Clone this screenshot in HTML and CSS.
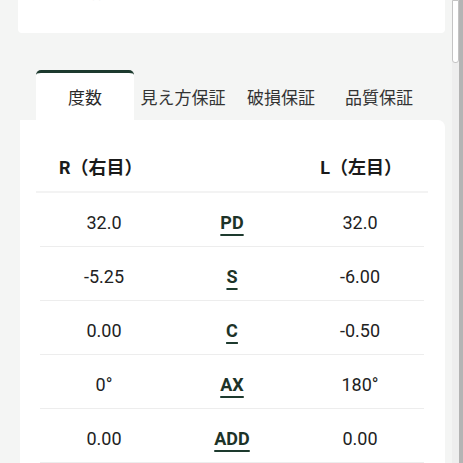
FILE: index.html
```html
<!DOCTYPE html>
<html lang="ja">
<head>
<meta charset="UTF-8" />
<meta name="viewport" content="width=device-width, initial-scale=1" />
<title>度数</title>
<link rel="stylesheet" href="styles.css">
</head>
<body>
  <div class="top-card">
    <p class="top-note">ご注文内容の確認</p>
  </div>

  <div class="section">
    <div class="tabs">
      <div class="tab active">度数</div>
      <div class="tab">見え方保証</div>
      <div class="tab">破損保証</div>
      <div class="tab">品質保証</div>
    </div>

    <div class="card">
      <div class="row head">
        <span class="eye">R（右目）</span>
        <span></span>
        <span class="eye">L（左目）</span>
      </div>
      <div class="row">
        <span class="val">32.0</span>
        <span class="label"><u>PD</u></span>
        <span class="val">32.0</span>
      </div>
      <div class="row">
        <span class="val">-5.25</span>
        <span class="label"><u>S</u></span>
        <span class="val">-6.00</span>
      </div>
      <div class="row">
        <span class="val">0.00</span>
        <span class="label"><u>C</u></span>
        <span class="val">-0.50</span>
      </div>
      <div class="row">
        <span class="val">0°</span>
        <span class="label"><u>AX</u></span>
        <span class="val">180°</span>
      </div>
      <div class="row">
        <span class="val">0.00</span>
        <span class="label"><u>ADD</u></span>
        <span class="val">0.00</span>
      </div>
    </div>
  </div>

  <div class="scrollbar"><div class="thumb"></div></div>
</body>
</html>
```

FILE: styles.css
```css
* {
  margin: 0;
  padding: 0;
  box-sizing: border-box;
}

body {
  background: #f4f5f4;
  color: #222;
  font-family: Roboto, "Noto Sans CJK JP", sans-serif;
  height: 100vh;
  overflow: hidden;
}

.top-card {
  background: #fff;
  margin: 0 18px;
  width: 427px;
  height: 33px;
  border-radius: 0 0 4px 4px;
  overflow: hidden;
}

.top-note {
  margin-top: -15px;
  padding-left: 20px;
  font-size: 13px;
  line-height: 17px;
  color: #e4e4e4;
}

.section {
  margin: 37px 0 0 20px;
  width: 425px;
}

.tabs {
  display: flex;
  margin: 0 17px 0 16px;
}

.tab {
  flex: 1;
  height: 50px;
  display: flex;
  align-items: center;
  justify-content: center;
  padding-top: 3px;
  font-size: 17px;
  color: #333;
}

.tab.active {
  background: #fff;
  border-top: 3px solid #1d3a2e;
  border-radius: 5px 5px 0 0;
  padding-top: 0;
  color: #2a2a2a;
}

.card {
  background: #fff;
  border-radius: 0 7px 0 0;
  padding: 0 17px 0 16px;
  min-height: 400px;
}

.row {
  display: grid;
  grid-template-columns: 1fr 1fr 1fr;
  align-items: center;
  height: 54px;
  padding-top: 5px;
  border-bottom: 1px solid #ededed;
  margin: 0 4px;
}

.row.head {
  height: 73px;
  padding-top: 20px;
  margin: 0;
  border-bottom: 2px solid #f3f3f3;
}

.eye {
  padding-left: 23px;
  font-size: 18px;
  font-weight: bold;
  color: #1a1a1a;
}

.val {
  text-align: center;
  font-size: 18px;
  color: #222;
}

.label {
  text-align: center;
  font-size: 18px;
  font-weight: bold;
  color: #1d3328;
}

.label u {
  text-decoration: underline;
  text-decoration-thickness: 2px;
  text-underline-offset: 5px;
  text-decoration-color: #1d3a2e;
}

.scrollbar {
  position: absolute;
  top: 0;
  right: 0;
  width: 11px;
  height: 100%;
  background: linear-gradient(to right, #eeeeee 0 7px, #b4b4b4 7px);
}

.thumb {
  width: 7px;
  height: 63px;
  background: #fff;
  border: 1px solid #c4c4c4;
  border-radius: 0 0 3px 3px;
}
```
